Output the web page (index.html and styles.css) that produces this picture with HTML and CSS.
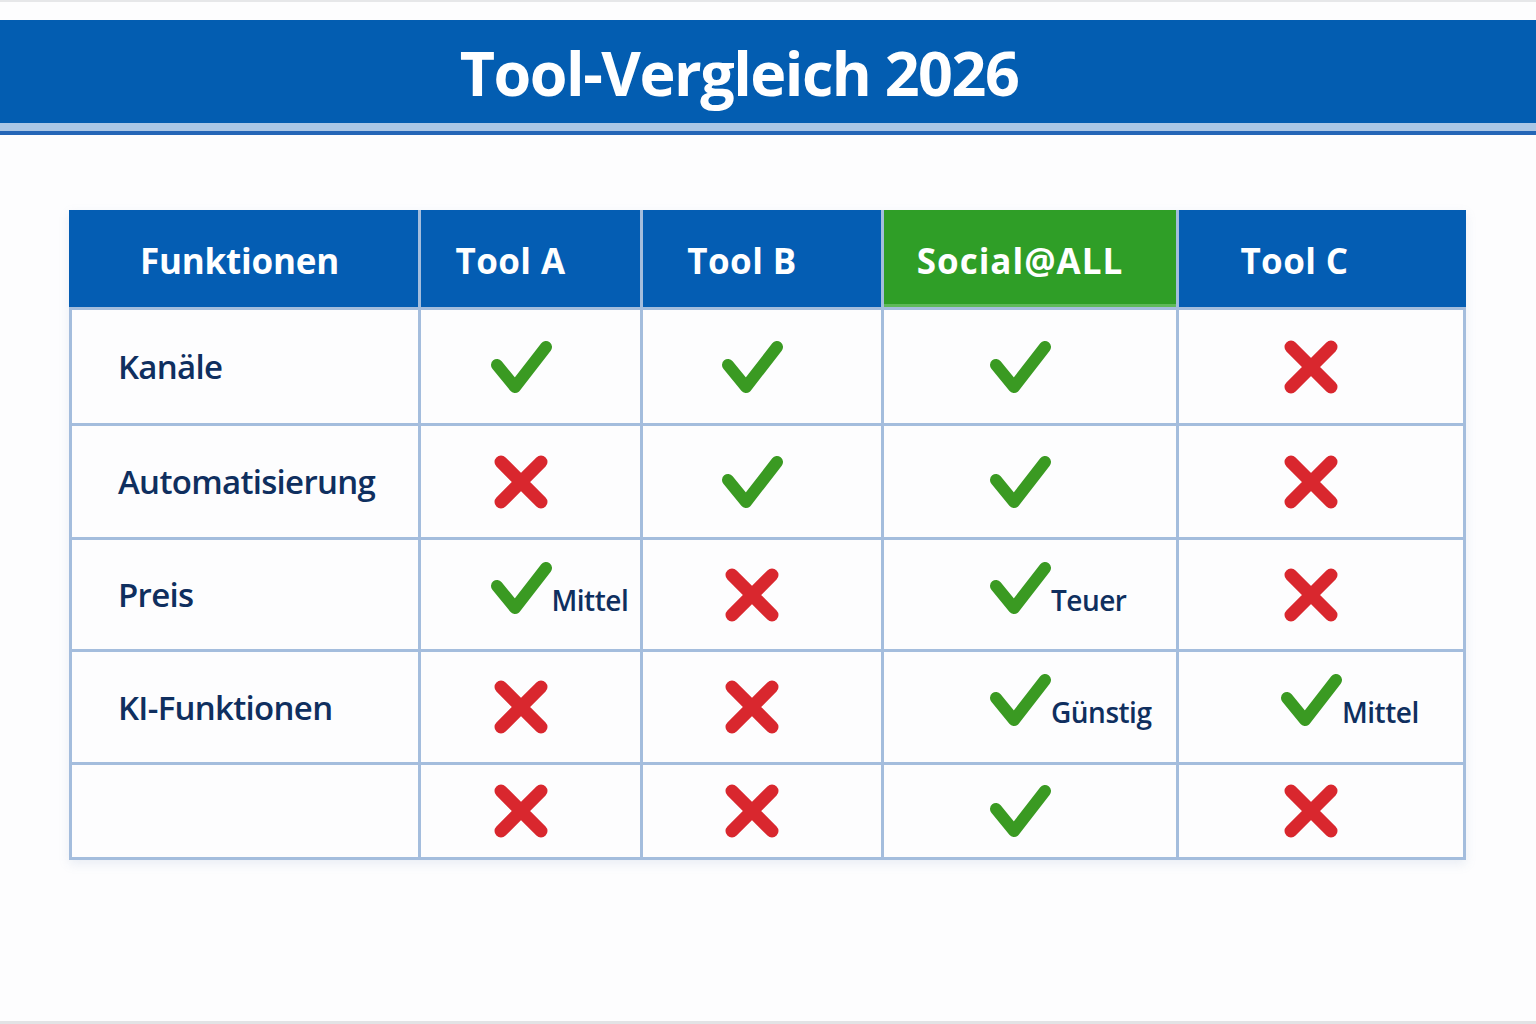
FILE: index.html
```html
<!DOCTYPE html>
<html lang="de">
<head>
<meta charset="utf-8">
<title>Tool-Vergleich 2026</title>
<link rel="stylesheet" href="styles.css">
</head>
<body>
<svg class="defs" aria-hidden="true">
  <symbol id="ic-check" viewBox="0 0 62 54">
    <path d="M7 25 L25 47 L56 7" fill="none" stroke="currentColor" stroke-width="12" stroke-linecap="round" stroke-linejoin="round"/>
  </symbol>
  <symbol id="ic-cross" viewBox="0 0 56 56">
    <path d="M8 8 L48 48 M48 8 L8 48" fill="none" stroke="currentColor" stroke-width="13" stroke-linecap="round"/>
  </symbol>
</svg>

<div class="topline"></div>
<header class="titlebar">
  <h1 class="title">Tool-Vergleich 2026</h1>
</header>
<div class="stripe"></div>
<div class="stripe-dark"></div>

<main class="page">
  <div class="table">
    <div class="th th-first th-label">Funktionen</div>
    <div class="th">Tool A</div>
    <div class="th">Tool B</div>
    <div class="th th-green">Social@ALL</div>
    <div class="th th-last">Tool C</div>

    <div class="td label">Kanäle</div>
    <div class="td mark-cell"><svg class="mark ok"><use href="#ic-check"/></svg></div>
    <div class="td mark-cell"><svg class="mark ok"><use href="#ic-check"/></svg></div>
    <div class="td mark-cell"><svg class="mark ok"><use href="#ic-check"/></svg></div>
    <div class="td mark-cell"><svg class="mark no"><use href="#ic-cross"/></svg></div>

    <div class="td label">Automatisierung</div>
    <div class="td mark-cell"><svg class="mark no"><use href="#ic-cross"/></svg></div>
    <div class="td mark-cell"><svg class="mark ok"><use href="#ic-check"/></svg></div>
    <div class="td mark-cell"><svg class="mark ok"><use href="#ic-check"/></svg></div>
    <div class="td mark-cell"><svg class="mark no"><use href="#ic-cross"/></svg></div>

    <div class="td label">Preis</div>
    <div class="td mark-cell has-note"><svg class="mark ok"><use href="#ic-check"/></svg><span class="note">Mittel</span></div>
    <div class="td mark-cell"><svg class="mark no"><use href="#ic-cross"/></svg></div>
    <div class="td mark-cell has-note"><svg class="mark ok"><use href="#ic-check"/></svg><span class="note">Teuer</span></div>
    <div class="td mark-cell"><svg class="mark no"><use href="#ic-cross"/></svg></div>

    <div class="td label">KI-Funktionen</div>
    <div class="td mark-cell"><svg class="mark no"><use href="#ic-cross"/></svg></div>
    <div class="td mark-cell"><svg class="mark no"><use href="#ic-cross"/></svg></div>
    <div class="td mark-cell has-note"><svg class="mark ok"><use href="#ic-check"/></svg><span class="note">Günstig</span></div>
    <div class="td mark-cell has-note"><svg class="mark ok"><use href="#ic-check"/></svg><span class="note">Mittel</span></div>

    <div class="td label"></div>
    <div class="td mark-cell"><svg class="mark no"><use href="#ic-cross"/></svg></div>
    <div class="td mark-cell"><svg class="mark no"><use href="#ic-cross"/></svg></div>
    <div class="td mark-cell"><svg class="mark ok"><use href="#ic-check"/></svg></div>
    <div class="td mark-cell"><svg class="mark no"><use href="#ic-cross"/></svg></div>
  </div>
</main>
<div class="bottomline"></div>
</body>
</html>
```

FILE: styles.css
```css
* { box-sizing: border-box; }

html, body {
  margin: 0;
  padding: 0;
}

body {
  width: 1536px;
  height: 1024px;
  background: #fdfdfe;
  font-family: "Open Sans", "Noto Sans", sans-serif;
  color: #0f2f5f;
  overflow: hidden;
  display: flex;
  flex-direction: column;
}

.defs {
  position: absolute;
  width: 0;
  height: 0;
  overflow: hidden;
}

.topline {
  height: 2px;
  background: #e6e7e9;
  margin-bottom: 18px;
}

.titlebar {
  height: 103px;
  background: #035db1;
  display: flex;
  align-items: center;
  justify-content: center;
  padding-right: 58px;
}

.title {
  margin: 0;
  color: #ffffff;
  font-size: 61px;
  font-weight: 700;
  letter-spacing: -1.5px;
  line-height: 1;
  padding-top: 2px;
}

.stripe {
  height: 8px;
  background: #aac7e6;
}

.stripe-dark {
  height: 4px;
  background: #2466b7;
}

.page {
  flex: 1;
  padding: 75px 0 0 69px;
}

.table {
  width: 1397px;
  display: grid;
  grid-template-columns: 346px 219px 238px 292px 284px;
  grid-template-rows: 97px 113px 111px 109px 110px 92px;
  gap: 3px;
  background: #a4bddd;
  border: 3px solid #a4bddd;
  border-top: 0;
  box-shadow: 0 4px 10px rgba(120, 150, 190, 0.15);
}

.th {
  background: #045db3;
  color: #ffffff;
  font-size: 35px;
  font-weight: 700;
  letter-spacing: 0.4px;
  display: flex;
  align-items: center;
  justify-content: center;
  padding-right: 40px;
  padding-top: 3px;
}

.th-label {
  padding-right: 8px;
  letter-spacing: -0.2px;
}

.th-first { margin-left: -3px; }

.th-last {
  margin-right: -3px;
  padding-right: 56px;
}

.th-green {
  background: #2f9e27;
  box-shadow: inset 0 -3px 0 #5fb85a;
  padding-right: 20px;
  letter-spacing: 1px;
}

.td {
  background: #fdfdfe;
}

.label {
  display: flex;
  align-items: center;
  padding-left: 46px;
  font-size: 33px;
  font-weight: 600;
  letter-spacing: -0.7px;
  color: #0f2f5f;
}

.mark-cell {
  display: grid;
  grid-template-columns: minmax(0, 1fr) auto minmax(0, 1fr);
  align-items: center;
  padding-right: 20px;
}

.mark {
  grid-column: 2;
  width: 62px;
  height: 54px;
  display: block;
}

.mark.no {
  width: 56px;
  height: 56px;
  margin: 0 3px;
}

.has-note .mark {
  margin-bottom: 14px;
}

.ok { color: #3a9a22; }
.no { color: #d9272e; }

.note {
  grid-column: 3;
  justify-self: start;
  white-space: nowrap;
  font-size: 28px;
  font-weight: 600;
  letter-spacing: -0.5px;
  line-height: 1;
  color: #0f2f5f;
  margin-left: 0;
  padding-top: 10px;
}

.bottomline {
  height: 3px;
  background: #e2e3e5;
}
```
